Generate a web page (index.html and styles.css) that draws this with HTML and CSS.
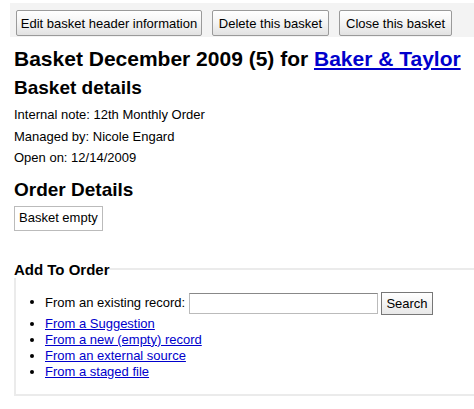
FILE: index.html
```html
<!DOCTYPE html>
<html>
<head>
<meta charset="utf-8">
<link rel="stylesheet" href="styles.css">
</head>
<body>
<div class="toolbar">
  <button class="tb-btn tb-edit">Edit basket header information</button>
  <button class="tb-btn tb-del">Delete this basket</button>
  <button class="tb-btn tb-close">Close this basket</button>
</div>
<h1 class="title">Basket December 2009 (5) for <a href="#">Baker &amp; Taylor</a></h1>
<h2 class="sect">Basket details</h2>
<p class="line">Internal note: 12th Monthly Order</p>
<p class="line">Managed by: Nicole Engard</p>
<p class="line">Open on: 12/14/2009</p>
<h2 class="sect sect2">Order Details</h2>
<div class="empty">Basket empty</div>
<fieldset class="add">
  <legend>Add To Order</legend>
  <ul class="opts">
    <li class="search-row">From an existing record: <input type="text" class="q"> <button class="search">Search</button></li>
    <li><a href="#">From a Suggestion</a></li>
    <li><a href="#">From a new (empty) record</a></li>
    <li><a href="#">From an external source</a></li>
    <li><a href="#">From a staged file</a></li>
  </ul>
</fieldset>
</body>
</html>
```
FILE: styles.css
```css
html, body { margin: 0; padding: 0; background: #fff; }
body {
  font-family: "Liberation Sans", Arial, sans-serif;
  font-size: 13px;
  color: #000;
  padding: 0 0 0 14px;
}
.toolbar {
  background: #f3f3f3;
  margin: 3px 0 0 -4px;
  padding: 7px 0 1px 6px;
  display: flex;
  gap: 10px;
  box-sizing: border-box;
  height: 34px;
}
.tb-btn {
  flex: none;
  white-space: nowrap;
  font-family: "Liberation Sans", Arial, sans-serif;
  font-size: 13px;
  color: #000;
  height: 26px;
  padding: 0;
  text-align: center;
  border: 1px solid #9a9a9a;
  border-radius: 2px;
  background: linear-gradient(#ffffff, #f4f4f4 50%, #e2e2e2);
  box-shadow: inset 0 1px 0 #fff;
}
.tb-edit { width: 186px; }
.tb-del { width: 117px; }
.tb-close { width: 113px; }
.title {
  font-size: 21px;
  font-weight: bold;
  margin: 9px 0 0 0;
  line-height: 26px;
}
.title a { color: #0000cc; text-decoration: underline; }
.sect {
  font-size: 19px;
  font-weight: bold;
  margin: 5px 0 5px 0;
  line-height: 22px;
}
.sect2 { margin-top: 10px; margin-bottom: 5px; }
.line { margin: 0; line-height: 21.5px; }
.empty {
  display: inline-block;
  border: 1px solid #bbb;
  padding: 3px 4px 4px 4px;
  line-height: 16px;
}
.add {
  margin: 30px 0 0 0;
  border: 2px solid #ebebeb;
  border-right: none;
  padding: 14px 0 14px 0;
  min-width: 0;
}
.add legend {
  font-size: 15px;
  font-weight: bold;
  padding: 0;
  margin-left: -2px;
}
.opts { margin: 0; padding-left: 29px; line-height: 16px; }
.opts a { color: #0000cc; }
.search-row { margin-bottom: 1px; }
.q {
  width: 183px;
  height: 17px;
  padding: 1px 2px;
  border: 1px solid #bbb;
  border-top-color: #888;
  vertical-align: middle;
  font-size: 13px;
}
.search {
  font-family: "Liberation Sans", Arial, sans-serif;
  font-size: 13px;
  height: 23px;
  padding: 0 4px;
  border: 1px solid #777;
  background: linear-gradient(#fff, #e8e8e8);
  vertical-align: middle;
}
```
